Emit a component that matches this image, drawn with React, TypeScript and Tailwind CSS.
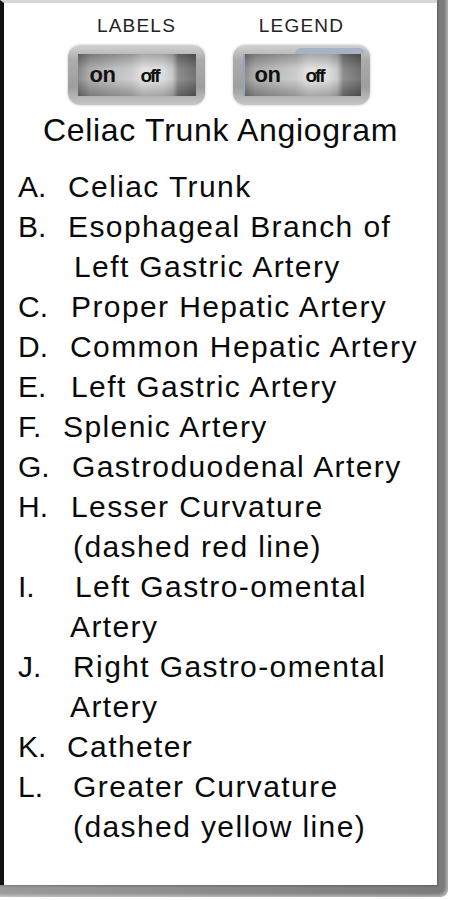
const items: { letter: string; w: string; text: string; more?: { pl: string; text: string } }[] = [
  { letter: "A.", w: "w-[50px]", text: "Celiac Trunk" },
  { letter: "B.", w: "w-[50px]", text: "Esophageal Branch of", more: { pl: "pl-[70px]", text: "Left Gastric Artery" } },
  { letter: "C.", w: "w-[53px]", text: "Proper Hepatic Artery" },
  { letter: "D.", w: "w-[52px]", text: "Common Hepatic Artery" },
  { letter: "E.", w: "w-[53px]", text: "Left Gastric Artery" },
  { letter: "F.", w: "w-[45px]", text: "Splenic Artery" },
  { letter: "G.", w: "w-[54px]", text: "Gastroduodenal Artery" },
  { letter: "H.", w: "w-[53px]", text: "Lesser Curvature", more: { pl: "pl-[69px]", text: "(dashed red line)" } },
  { letter: "I.", w: "w-[57px]", text: "Left Gastro-omental", more: { pl: "pl-[66px]", text: "Artery" } },
  { letter: "J.", w: "w-[55px]", text: "Right Gastro-omental", more: { pl: "pl-[66px]", text: "Artery" } },
  { letter: "K.", w: "w-[49px]", text: "Catheter" },
  { letter: "L.", w: "w-[55px]", text: "Greater Curvature", more: { pl: "pl-[69px]", text: "(dashed yellow line)" } },
];

function Toggle({ blue }: { blue?: boolean }) {
  return (
    <div className="relative flex h-[60px] w-[137px] items-center justify-center rounded-[12px] bg-[linear-gradient(180deg,#d2d2d2,#acacac_25%,#9e9e9e_70%,#c6c6c6)] shadow-[0_0_3px_#c4c4c4]">
      {blue && (
        <div className="absolute left-[62px] top-[3px] h-[6px] w-[70px] rounded-t-[6px] bg-[#a9b1c6]" />
      )}
      <div className="relative flex h-[42px] w-[118px] items-center overflow-hidden bg-[linear-gradient(90deg,#7a7a7a_0%,#a3a3a3_10%,#b8b8b8_30%,#c6c6c6_45%,#e0e0e0_55%,#dadada_72%,#c2c2c2_80%,#808080_85%,#636363_100%)]">
        <div className="absolute inset-0 bg-[linear-gradient(180deg,rgba(0,0,0,0.25),rgba(255,255,255,0.08)_35%,rgba(255,255,255,0.12)_60%,rgba(0,0,0,0.25))]" />
        {blue && <div className="absolute left-0 top-0 h-full w-[2px] bg-[#9aa3bd]" />}
        <span className="relative ml-[12px] text-[22px] font-bold leading-none tracking-[-0.5px] text-[#111]">on</span>
        <span className="relative ml-[25px] text-[19px] font-bold leading-none tracking-[-2px] text-[#111]">off</span>
      </div>
    </div>
  );
}

export default function App() {
  return (
    <div className="h-[900px] w-[452px] bg-white font-['Liberation_Sans',Arial,sans-serif]">
      <div className="h-[897px] w-[448px] rounded-br-[8px] bg-[linear-gradient(90deg,#9a9a9a,#7a7a7a)] pb-[12px] pr-[11px] shadow-[inset_-2px_-2px_3px_rgba(255,255,255,0.4)]">
        <div className="h-full border-l-4 border-t-[3px] border-l-[#111] border-t-[#d6d6d6] bg-white shadow-[1px_1px_2px_rgba(0,0,0,0.25)]">
          <div className="ml-[64px] flex gap-[28px] pt-[13px]">
            <div className="flex w-[137px] flex-col items-center">
              <div className="text-[19px] leading-[20px] tracking-[1.2px] text-[#222]">LABELS</div>
              <div className="mt-[9px]">
                <Toggle />
              </div>
            </div>
            <div className="flex w-[137px] flex-col items-center">
              <div className="text-[19px] leading-[20px] tracking-[1.2px] text-[#222]">LEGEND</div>
              <div className="mt-[9px]">
                <Toggle blue />
              </div>
            </div>
          </div>
          <div className="mt-[7px] text-center text-[32px] leading-[36px] tracking-[0.7px] text-[#0a0a0a]">
            Celiac Trunk Angiogram
          </div>
          <div className="mt-[19px] text-[30px] leading-[40px] text-[#0a0a0a]">
            {items.map((it) => (
              <div key={it.letter}>
                <div className="flex pl-[14px]">
                  <span className={`inline-block shrink-0 ${it.w}`}>{it.letter}</span>
                  <span className="whitespace-nowrap tracking-[1.4px]">{it.text}</span>
                </div>
                {it.more && (
                  <div className={`whitespace-nowrap tracking-[1.4px] ${it.more.pl}`}>{it.more.text}</div>
                )}
              </div>
            ))}
          </div>
        </div>
      </div>
    </div>
  );
}
